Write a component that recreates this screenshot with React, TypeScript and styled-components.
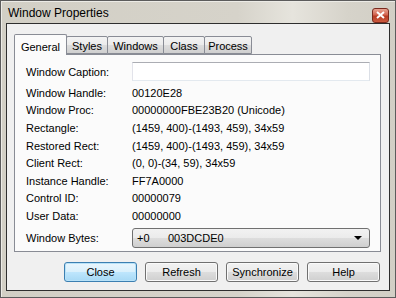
import React from 'react';
import styled, { createGlobalStyle } from 'styled-components';

const GlobalStyle = createGlobalStyle`
  html, body {
    margin: 0;
    padding: 0;
    background: #ffffff;
  }
  body {
    font-family: "Liberation Sans", Arial, sans-serif;
    font-size: 11px;
    color: #000000;
  }
`

const Window = styled.div`
  box-sizing: border-box;
  width: 396px;
  height: 298px;
  display: flex;
  flex-direction: column;
  border: 1px solid #5c5c5c;
  padding: 0 5px 6px 5px;
  background: linear-gradient(to right, #d2cfc5 0%, #d6d3ca 60%, #e6e4dd 74%, #d6d3ca 88%, #d2cfc5 100%);
  box-shadow: inset 1px 1px 0 #ecebe6;
`

const TitleBar = styled.div`
  height: 22px;
  display: flex;
  align-items: center;
  justify-content: space-between;
  padding: 0 0 0 2px;
`

const TitleText = styled.span`
  font-size: 12px;
  color: #000000;
  margin-top: 2px;
`

const CloseBox = styled.div`
  box-sizing: border-box;
  width: 17px;
  height: 15px;
  margin-top: 6px;
  margin-right: 1px;
  border: 1px solid #7a2a1e;
  border-radius: 3px;
  background: linear-gradient(#e9a493 0%, #d2634f 45%, #b83b24 55%, #cc5a3e 100%);
  display: flex;
  align-items: center;
  justify-content: center;
`

const Client = styled.div`
  flex: 1;
  display: flex;
  flex-direction: column;
  border: 1px solid #2e2e2e;
  background: #f0f0f0;
  padding: 9px 8px 0 7px;
`

const TabRow = styled.div`
  display: flex;
  align-items: flex-end;
  height: 21px;
  position: relative;
  z-index: 1;
`

const Tab = styled.div<{ $active?: boolean; $w: number }>`
  box-sizing: border-box;
  width: ${p => p.$w}px;
  height: ${p => (p.$active ? '21px' : '18px')};
  padding-top: ${p => (p.$active ? '3px' : '1px')};
  margin-left: ${p => (p.$active ? '0' : '-1px')};
  margin-bottom: ${p => (p.$active ? '-1px' : '0')};
  border: 1px solid #898c95;
  border-bottom: ${p => (p.$active ? 'none' : '1px solid #898c95')};
  border-radius: 2px 2px 0 0;
  background: ${p => (p.$active ? '#fbfbfb' : 'linear-gradient(#f3f3f3 0%, #ebebeb 50%, #dddddd 51%, #cfcfcf 100%)')};
  display: flex;
  align-items: center;
  justify-content: center;
  font-size: 11px;
`

const Panel = styled.div`
  box-sizing: border-box;
  height: 198px;
  border: 1px solid #898c95;
  background: #fbfbfb;
  padding: 7px 10px 0 11px;
  display: flex;
  flex-direction: column;
`

const FieldRow = styled.div<{ $h: number; $gap?: number }>`
  display: grid;
  grid-template-columns: 106px 1fr;
  align-items: center;
  height: ${p => p.$h}px;
  margin-top: ${p => p.$gap ?? 0}px;
`

const Label = styled.span`
  white-space: nowrap;
`

const Value = styled.span`
  white-space: nowrap;
`

const TextInput = styled.div`
  box-sizing: border-box;
  height: 19px;
  width: 238px;
  border: 1px solid #abadb3;
  border-left-color: #e2e3ea;
  border-right-color: #dbdfe6;
  border-bottom-color: #e3e9ef;
  background: #ffffff;
`

const Select = styled.div`
  box-sizing: border-box;
  height: 20px;
  width: 238px;
  border: 1px solid #707070;
  border-radius: 3px;
  background: linear-gradient(#f2f2f2 0%, #ebebeb 50%, #dddddd 51%, #cfcfcf 100%);
  display: flex;
  align-items: center;
  padding: 0 7px 0 4px;
`

const SelectOffset = styled.span`
  width: 31px;
`

const SelectValue = styled.span`
  flex: 1;
`

const Arrow = styled.div`
  width: 0;
  height: 0;
  border-left: 4px solid transparent;
  border-right: 4px solid transparent;
  border-top: 4px solid #000000;
`

const ButtonRow = styled.div`
  display: flex;
  justify-content: flex-end;
  gap: 8px;
  margin-top: 10px;
  padding-right: 1px;
`

const Button = styled.div<{ $default?: boolean }>`
  box-sizing: border-box;
  width: 73px;
  height: 20px;
  border: 1px solid ${p => (p.$default ? '#3c7fb1' : '#707070')};
  border-radius: 3px;
  background: ${p =>
    p.$default
      ? 'linear-gradient(#eaf6fd 0%, #d9f0fc 50%, #bee6fd 51%, #a7d9f5 100%)'
      : 'linear-gradient(#f2f2f2 0%, #ebebeb 50%, #dddddd 51%, #cfcfcf 100%)'};
  box-shadow: ${p => (p.$default ? 'inset 0 0 0 1px #b8e2f8' : 'inset 0 0 0 1px #fafafa')};
  display: flex;
  align-items: center;
  justify-content: center;
  font-size: 11px;
`

const fields: [string, string][] = [
  ['Window Handle:', '00120E28'],
  ['Window Proc:', '00000000FBE23B20 (Unicode)'],
  ['Rectangle:', '(1459, 400)-(1493, 459), 34x59'],
  ['Restored Rect:', '(1459, 400)-(1493, 459), 34x59'],
  ['Client Rect:', '(0, 0)-(34, 59), 34x59'],
  ['Instance Handle:', 'FF7A0000'],
  ['Control ID:', '00000079'],
  ['User Data:', '00000000'],
]

const tabs: [string, number][] = [
  ['General', 53],
  ['Styles', 42],
  ['Windows', 57],
  ['Class', 42],
  ['Process', 48],
]

const App: React.FC = () => (
  <>
    <GlobalStyle />
    <Window>
      <TitleBar>
        <TitleText>Window Properties</TitleText>
        <CloseBox>
          <svg width="9" height="8" viewBox="0 0 9 8">
            <path d="M1 1 L8 7 M8 1 L1 7" stroke="#ffffff" strokeWidth="2" />
          </svg>
        </CloseBox>
      </TitleBar>
      <Client>
        <TabRow>
          {tabs.map(([t, w], i) => (
            <Tab key={t} $w={w} $active={i === 0}>{t}</Tab>
          ))}
        </TabRow>
        <Panel>
          <FieldRow $h={19}>
            <Label>Window Caption:</Label>
            <TextInput />
          </FieldRow>
          {fields.map(([label, value], i) => (
            <FieldRow key={label} $h={17.6} $gap={i === 0 ? 3 : 0}>
              <Label>{label}</Label>
              <Value>{value}</Value>
            </FieldRow>
          ))}
          <FieldRow $h={20} $gap={3}>
            <Label>Window Bytes:</Label>
            <Select>
              <SelectOffset>+0</SelectOffset>
              <SelectValue>003DCDE0</SelectValue>
              <Arrow />
            </Select>
          </FieldRow>
        </Panel>
        <ButtonRow>
          <Button $default>Close</Button>
          <Button>Refresh</Button>
          <Button>Synchronize</Button>
          <Button>Help</Button>
        </ButtonRow>
      </Client>
    </Window>
  </>
)

export default App
